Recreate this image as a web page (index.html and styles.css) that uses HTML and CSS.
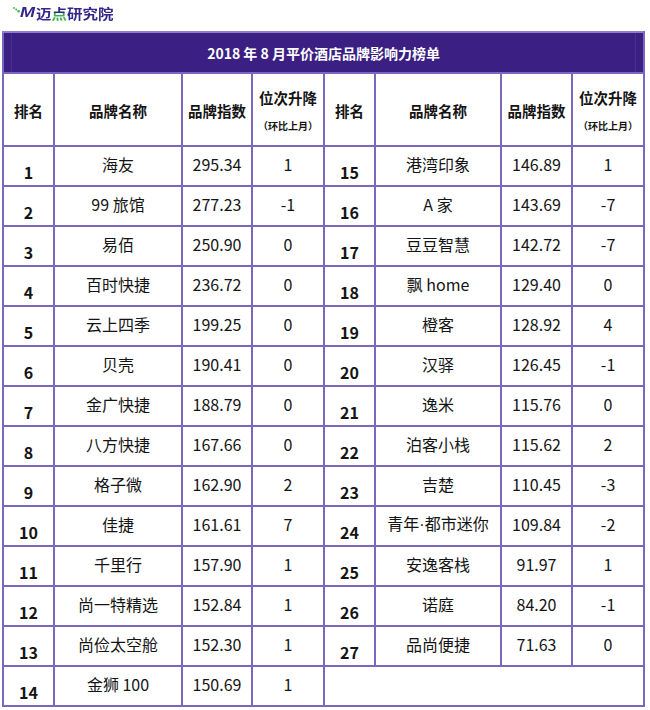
FILE: index.html
```html
<!DOCTYPE html>
<html lang="zh-CN">
<head>
<meta charset="utf-8">
<title>2018 年 8 月平价酒店品牌影响力榜单</title>
<link rel="stylesheet" href="styles.css">
</head>
<body>
<header class="logo">
  <svg class="logo-dots" width="7" height="6" viewBox="0 0 7 6">
    <circle cx="1" cy="1" r="0.9" fill="#3bb54a"/>
    <circle cx="3.2" cy="2.4" r="1" fill="#3bb54a"/>
    <circle cx="5.6" cy="4.2" r="1.3" fill="#3bb54a"/>
  </svg>
  <span class="logo-m">M</span>
  <span class="logo-text">迈<span class="logo-dian">点</span>研究院</span>
</header>
<table class="rank">
  <colgroup>
    <col class="c-rank"><col class="c-name"><col class="c-idx"><col class="c-chg">
    <col class="c-rank"><col class="c-name2"><col class="c-idx2"><col class="c-chg">
  </colgroup>
  <tr class="title-row"><td colspan="8" class="title">2018 年 8 月平价酒店品牌影响力榜单</td></tr>
  <tr class="head-row">
    <th>排名</th><th>品牌名称</th><th>品牌指数</th><th class="chg-head"><span class="chg-main">位次升降</span><span class="chg-sub">（环比上月）</span></th>
    <th>排名</th><th>品牌名称</th><th>品牌指数</th><th class="chg-head"><span class="chg-main">位次升降</span><span class="chg-sub">（环比上月）</span></th>
  </tr>
  <tr><td class="no">1</td><td>海友</td><td>295.34</td><td>1</td><td class="no">15</td><td>港湾印象</td><td>146.89</td><td>1</td></tr>
  <tr><td class="no">2</td><td>99 旅馆</td><td>277.23</td><td>-1</td><td class="no">16</td><td>A 家</td><td>143.69</td><td>-7</td></tr>
  <tr><td class="no">3</td><td>易佰</td><td>250.90</td><td>0</td><td class="no">17</td><td>豆豆智慧</td><td>142.72</td><td>-7</td></tr>
  <tr><td class="no">4</td><td>百时快捷</td><td>236.72</td><td>0</td><td class="no">18</td><td>飘 home</td><td>129.40</td><td>0</td></tr>
  <tr><td class="no">5</td><td>云上四季</td><td>199.25</td><td>0</td><td class="no">19</td><td>橙客</td><td>128.92</td><td>4</td></tr>
  <tr><td class="no">6</td><td>贝壳</td><td>190.41</td><td>0</td><td class="no">20</td><td>汉驿</td><td>126.45</td><td>-1</td></tr>
  <tr><td class="no">7</td><td>金广快捷</td><td>188.79</td><td>0</td><td class="no">21</td><td>逸米</td><td>115.76</td><td>0</td></tr>
  <tr><td class="no">8</td><td>八方快捷</td><td>167.66</td><td>0</td><td class="no">22</td><td>泊客小栈</td><td>115.62</td><td>2</td></tr>
  <tr><td class="no">9</td><td>格子微</td><td>162.90</td><td>2</td><td class="no">23</td><td>吉楚</td><td>110.45</td><td>-3</td></tr>
  <tr><td class="no">10</td><td>佳捷</td><td>161.61</td><td>7</td><td class="no">24</td><td>青年<span class="dot">·</span>都市迷你</td><td>109.84</td><td>-2</td></tr>
  <tr><td class="no">11</td><td>千里行</td><td>157.90</td><td>1</td><td class="no">25</td><td>安逸客栈</td><td>91.97</td><td>1</td></tr>
  <tr><td class="no">12</td><td>尚一特精选</td><td>152.84</td><td>1</td><td class="no">26</td><td>诺庭</td><td>84.20</td><td>-1</td></tr>
  <tr><td class="no">13</td><td>尚俭太空舱</td><td>152.30</td><td>1</td><td class="no">27</td><td>品尚便捷</td><td>71.63</td><td>0</td></tr>
  <tr><td class="no">14</td><td>金狮 100</td><td>150.69</td><td>1</td><td colspan="4" class="empty"></td></tr>
</table>
</body>
</html>
```

FILE: styles.css
```css
html, body {
  margin: 0;
  padding: 0;
  background: #ffffff;
}
body {
  font-family: "Noto Sans CJK SC", "Noto Sans", sans-serif;
  color: #141414;
  width: 650px;
  height: 710px;
  overflow: hidden;
}

.logo {
  height: 31px;
  display: flex;
  align-items: flex-start;
  padding: 4px 0 0 13px;
  box-sizing: border-box;
}
.logo-dots {
  margin-top: 3px;
}
.logo-m {
  font-family: "Liberation Sans", sans-serif;
  font-weight: 700;
  font-style: italic;
  font-size: 18px;
  line-height: 16px;
  color: #34278a;
  letter-spacing: -1px;
  margin-top: 2px;
  margin-right: 2px;
  transform: scaleY(0.8);
  transform-origin: top left;
}
.logo-text {
  font-weight: 700;
  font-size: 15.5px;
  line-height: 18px;
  color: #34278a;
  transform: scaleY(0.85);
  transform-origin: top left;
  margin-top: 1px;
}
.logo-dian {
  background: linear-gradient(#34278a 0 52%, #3bb54a 52% 100%);
  -webkit-background-clip: text;
  background-clip: text;
  color: transparent;
}

.rank {
  border-collapse: collapse;
  table-layout: fixed;
  width: 643px;
  margin-left: 2px;
}
.c-rank { width: 51px; }
.c-name { width: 128px; }
.c-idx { width: 70px; }
.c-chg { width: 72px; }
.c-name2 { width: 126px; }
.c-idx2 { width: 71px; }

.rank td, .rank th {
  border: 2px solid #7a68bf;
  padding: 0;
  text-align: center;
  vertical-align: middle;
  font-size: 16px;
  font-weight: 400;
  line-height: 20px;
}
.rank tr {
  height: 40px;
}
.rank td {
  padding-bottom: 4px;
}
.dot {
  font-family: "Liberation Sans", sans-serif;
}

.rank .title-row {
  height: 41px;
}
.rank .title {
  background: #3b1f82;
  color: #ffffff;
  font-weight: 700;
  font-size: 14px;
  padding: 0;
  border-top-color: #8c7fcf;
  box-shadow: inset 7px 0 0 #3b1f82, inset 8px 0 0 #47308c, inset -7px 0 0 #3b1f82, inset -8px 0 0 #47308c;
}

.rank .head-row {
  height: 73px;
}
.rank th {
  font-weight: 700;
  font-size: 14.5px;
  padding-top: 3px;
}
.rank .chg-head {
  padding-top: 2px;
}
.chg-main {
  display: block;
  line-height: 20px;
  margin-top: 0;
}
.chg-sub {
  display: block;
  font-size: 10px;
  line-height: 14px;
  margin-top: 11px;
}

.rank td.no {
  font-weight: 700;
  padding-top: 11px;
  padding-bottom: 0;
}
.rank td.empty {
  padding: 0;
}
```
